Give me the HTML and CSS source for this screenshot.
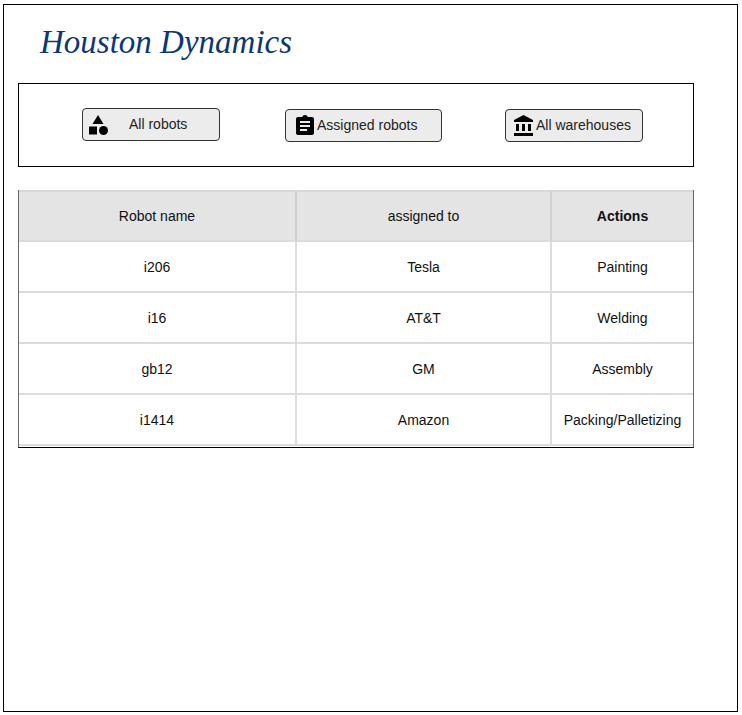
FILE: index.html
```html
<!DOCTYPE html>
<html lang="en">
<head>
    <meta charset="UTF-8">
    <meta name="viewport" content="width=device-width, initial-scale=1.0">
    <title>Houston Dynamics</title>
    <link rel="stylesheet" href="styles.css">
</head>
<body>

    <div class="frame">
        <h1 class="title">Houston Dynamics</h1>

        <!-- Nav buttons -->
        <nav class="nav-panel">
            <button class="nav-btn btn-robots" type="button">
                <svg class="nav-icon" viewBox="0 0 24 24"><path d="M12 2l-5.5 9h11z"/><circle cx="17.5" cy="17.5" r="4.5"/><path d="M3 13.5h8v8H3z"/></svg>
                <span class="nav-label">All robots</span>
            </button>
            <button class="nav-btn btn-assigned" type="button">
                <svg class="nav-icon" viewBox="0 0 24 24"><path d="M19 3h-4.18C14.4 1.84 13.3 1 12 1c-1.3 0-2.4.84-2.82 2H5c-1.1 0-2 .9-2 2v14c0 1.1.9 2 2 2h14c1.1 0 2-.9 2-2V5c0-1.1-.9-2-2-2zm-5 14H7v-2h7v2zm3-4H7v-2h10v2zm0-4H7V7h10v2z"/></svg>
                <span class="nav-label">Assigned robots</span>
            </button>
            <button class="nav-btn btn-warehouses" type="button">
                <svg class="nav-icon" viewBox="0 0 24 24"><path d="M4 10v7h3v-7H4zm6 0v7h3v-7h-3zM2 22h19v-3H2v3zm14-12v7h3v-7h-3zm-4.5-9L2 6v2h19V6l-9.5-5z"/></svg>
                <span class="nav-label">All warehouses</span>
            </button>
        </nav>

        <table class="robots">
            <thead>
                <tr>
                    <th class="col-name">Robot name</th>
                    <th class="col-owner">assigned to</th>
                    <th class="col-actions">Actions</th>
                </tr>
            </thead>
            <tbody>
                <tr><td>i206</td><td>Tesla</td><td>Painting</td></tr>
                <tr><td>i16</td><td>AT&amp;T</td><td>Welding</td></tr>
                <tr><td>gb12</td><td>GM</td><td>Assembly</td></tr>
                <tr><td>i1414</td><td>Amazon</td><td>Packing/Palletizing</td></tr>
            </tbody>
        </table>
    </div>

</body>
</html>
```

FILE: styles.css
```css
body {
    font-family: "Liberation Sans", Arial, sans-serif;
    background-color: white;
    color: #111;
    margin: 0;
    padding: 4px 0 0 3px;
}

.frame {
    box-sizing: border-box;
    width: 735px;
    height: 708px;
    border: 1px solid black;
    padding: 18px 0 0 14px;
}

.title {
    margin: 0 0 22px 22px;
    font-family: "Liberation Serif", "Times New Roman", serif;
    font-size: 33px;
    line-height: 38px;
    font-style: italic;
    font-weight: normal;
    color: #0b3777;
}

/* Nav buttons */
.nav-panel {
    box-sizing: border-box;
    display: flex;
    align-items: flex-start;
    width: 676px;
    height: 84px;
    border: 1px solid black;
    padding: 24px 0 0 63px;
    margin-bottom: 23px;
}

.nav-btn {
    box-sizing: border-box;
    display: flex;
    align-items: center;
    height: 33px;
    padding: 0;
    border: 1px solid #333;
    border-radius: 4px;
    background: #ececec;
    color: #222;
    font-family: inherit;
    font-size: 14px;
    cursor: pointer;
}

.nav-icon {
    width: 24px;
    height: 24px;
    flex: none;
    fill: black;
}

.nav-label {
    padding-bottom: 2px;
}

.btn-robots {
    width: 138px;
    padding-left: 3px;
}

.btn-robots .nav-label {
    margin-left: 19px;
}

.btn-assigned {
    width: 157px;
    margin: 1px 0 0 65px;
    padding-left: 7px;
}

.btn-warehouses {
    width: 138px;
    margin: 1px 0 0 63px;
    padding-left: 6px;
}

/* Table */
.robots {
    box-sizing: border-box;
    width: 676px;
    table-layout: fixed;
    border-collapse: separate;
    border-spacing: 0;
    padding-bottom: 1px;
    border-left: 1px solid #666;
    border-right: 1px solid #666;
    border-bottom: 1px solid black;
    font-size: 14px;
}

.robots th,
.robots td {
    box-sizing: border-box;
    height: 51px;
    padding: 0;
    text-align: center;
    font-weight: normal;
    border-bottom: 2px solid #dcdcdc;
    border-right: 2px solid #dcdcdc;
}

.robots th {
    height: 52px;
    background: #e4e4e4;
    border-top: 2px solid #d8d8d8;
    border-right-color: #d0d0d0;
}

.robots tr > :last-child {
    border-right: none;
}

.col-name {
    width: 278px;
}

.col-owner {
    width: 255px;
}

.robots .col-actions {
    font-weight: bold;
}
```
